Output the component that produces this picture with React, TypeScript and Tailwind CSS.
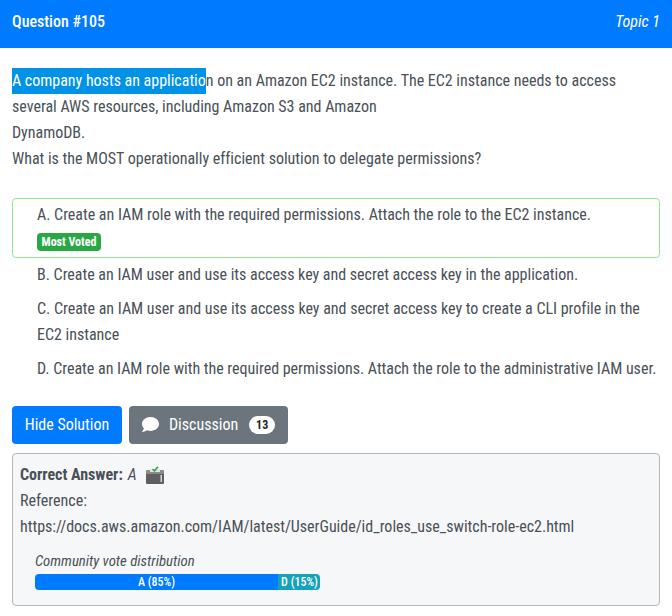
const condensed = "[font-family:Roboto,sans-serif] [font-stretch:75%] tracking-[-0.012px]";

function VoteBox() {
  return (
    <svg width="18" height="18" viewBox="0 0 18 18" className="ml-[9px]">
      <path d="M0 5h18v12a1 1 0 0 1-1 1H1a1 1 0 0 1-1-1z" fill="#5f5f5f" />
      <rect x="0" y="4" width="18" height="4" rx="1" fill="#8a8a8a" />
      <rect x="4" y="3" width="10" height="3" fill="#e3e3e3" />
      <rect x="14.500" y="9" width="1.500" height="7" fill="#d8d8d8" />
      <path d="M6.500 3l2 1.800 3.500-4" fill="none" stroke="#28a745" strokeWidth="1.600" />
    </svg>
  );
}

export default function App() {
  return (
    <div className={`w-[672px] h-[616px] bg-white text-[16px] leading-[26px] text-[#495057] overflow-hidden ${condensed}`}>
      <header className="h-12 bg-[#007bff] text-white flex items-center justify-between px-3 pb-1">
        <span className="font-medium">Question #105</span>
        <span className="italic">Topic 1</span>
      </header>

      <div className="px-3 pt-[20px]">
        <p>
          <span className="inline-block bg-[#0092e6] text-white">A company hosts an applicatio</span>n on an Amazon EC2 instance. The EC2 instance needs to access
          <br />
          several AWS resources, including Amazon S3 and Amazon
          <br />
          DynamoDB.
          <br />
          What is the MOST operationally efficient solution to delegate permissions?
        </p>

        <ul className="mt-[26px]">
          <li className="h-[60px] border border-[#8fe88f] rounded-[4px] pl-6 pt-[3px]">
            <div>A. Create an IAM role with the required permissions. Attach the role to the EC2 instance.</div>
            <span className="inline-flex items-center justify-center h-[18px] w-[64px] rounded-[4px] bg-[#28a745] text-white text-[12px] font-bold leading-none">Most Voted</span>
          </li>
          <li className="pl-[25px] py-1">B. Create an IAM user and use its access key and secret access key in the application.</li>
          <li className="pl-[25px] py-1">C. Create an IAM user and use its access key and secret access key to create a CLI profile in the EC2 instance</li>
          <li className="pl-[25px] py-1">D. Create an IAM role with the required permissions. Attach the role to the administrative IAM user.</li>
        </ul>

        <div className="flex gap-[7px] mt-[20px]">
          <button className="h-[38px] w-[110px] bg-[#007bff] text-white rounded-[4px]">Hide Solution</button>
          <button className="h-[38px] w-[159px] bg-[#6c757d] text-white rounded-[4px] flex items-center pl-[13px]">
            <svg width="17" height="15" viewBox="0 0 512 448" fill="#fff" className="-mt-[1px]">
              <path d="M256 0C114.600 0 0 93.100 0 208c0 49.600 21.400 95 57 130.700C44.500 389.100 2.700 434 2.200 434.500c-2.200 2.300-2.800 5.700-1.500 8.700S4.800 448 8 448c66.300 0 116-31.800 140.600-51.400 32.700 12.300 69 19.400 107.400 19.400 141.400 0 256-93.100 256-208S397.400 0 256 0z" />
            </svg>
            <span className="ml-[10px]">Discussion</span>
            <span className="ml-[11px] w-[26px] h-[18px] rounded-full bg-white text-[#212529] text-[12px] font-bold leading-[18px] text-center">13</span>
          </button>
        </div>

        <div className="mt-[9px] h-[153px] border border-[#b5b5b5] rounded-[4px] bg-[#f6f7f9] px-[7px] pt-[8px]">
          <div className="flex items-center">
            <strong className="font-bold">Correct Answer:</strong>
            <em className="ml-[5px]">A</em>
            <VoteBox />
          </div>
          <div>Reference:</div>
          <div>https://docs.aws.amazon.com/IAM/latest/UserGuide/id_roles_use_switch-role-ec2.html</div>
          <div className="pl-[15px] mt-[10px]">
            <div className="italic text-[14.8px] leading-[22px] mb-[2px]">Community vote distribution</div>
            <div className="flex w-[285px] h-4 rounded-[4px] overflow-hidden text-white text-[12px] font-medium leading-4 text-center">
              <div className="w-[243px] bg-[#007bff]">A (85%)</div>
              <div className="w-[42px] bg-[#17a2b8] pl-px">D (15%)</div>
            </div>
          </div>
        </div>
      </div>
    </div>
  );
}
